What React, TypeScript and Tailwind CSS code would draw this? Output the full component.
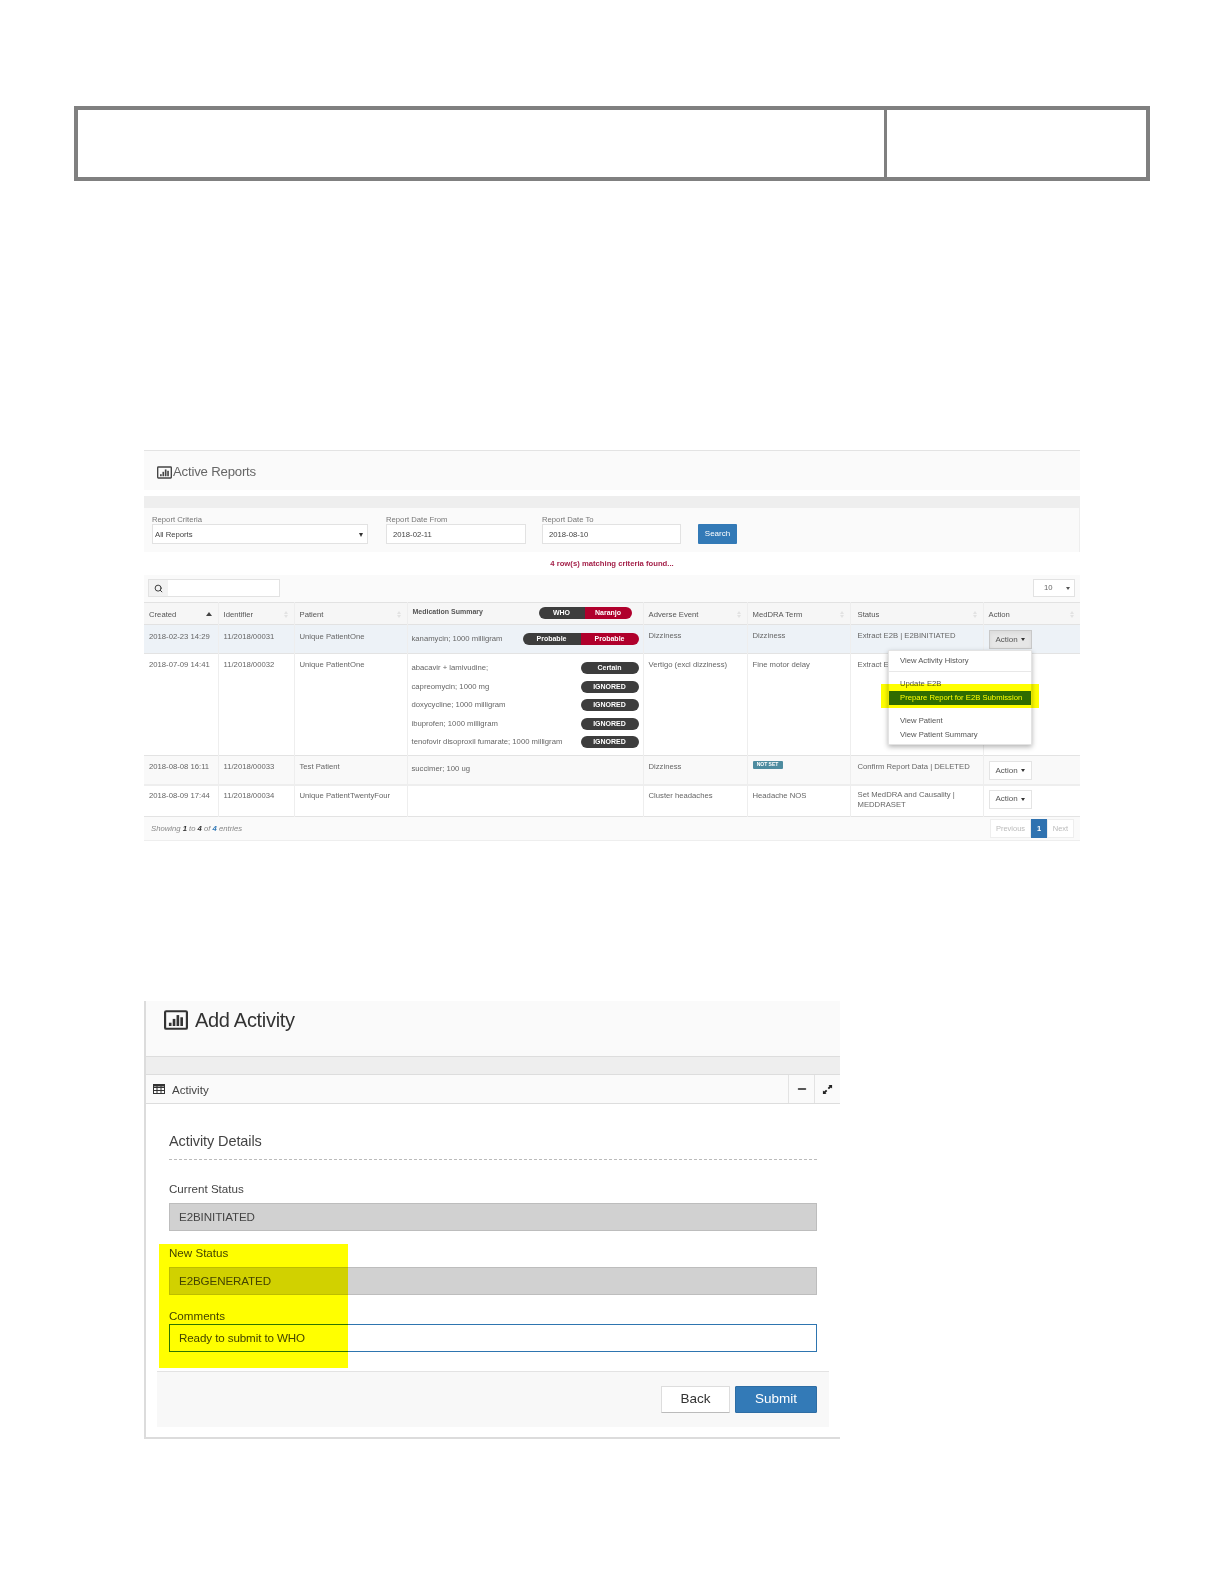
import React from "react";
import { Search, Minus } from "lucide-react";

const BarIcon = ({ className }: { className: string }) => (
  <svg viewBox="0 0 22 18" className={className} fill="none">
    <rect x="1" y="1" width="20" height="16" rx="1" stroke="currentColor" strokeWidth="2" />
    <rect x="4.5" y="11.5" width="2.4" height="3" fill="currentColor" />
    <rect x="8" y="8" width="2.4" height="6.5" fill="currentColor" />
    <rect x="11.5" y="4.5" width="2.4" height="10" fill="currentColor" />
    <rect x="15" y="6.5" width="2.4" height="8" fill="currentColor" />
  </svg>
);

const Sort = ({ active }: { active?: boolean }) =>
  active ? (
    <span className="w-0 h-0 border-x-[3px] border-x-transparent border-b-[4px] border-b-[#444] mr-[1px]" />
  ) : (
    <span className="flex flex-col gap-[1px] mr-[1px]">
      <span className="w-0 h-0 border-x-[2.5px] border-x-transparent border-b-[3px] border-b-[#e2e2e2]" />
      <span className="w-0 h-0 border-x-[2.5px] border-x-transparent border-t-[3px] border-t-[#e2e2e2]" />
    </span>
  );

const Pill = ({ text, right, className }: { text: string; right?: boolean; className: string }) => (
  <span
    className={`flex items-center justify-center h-[12px] text-white font-bold text-[7px] ${right ? "bg-[#b0002c] rounded-r-full rounded-l-[4px]" : "bg-[#3d3d3d] rounded-l-full rounded-r-[4px]"} ${className}`}
  >
    {text}
  </span>
);

const Dark = ({ text }: { text: string }) => (
  <span className="flex items-center justify-center w-[58px] h-[12px] rounded-full bg-[#3d3d3d] text-white font-bold text-[7px]">
    {text}
  </span>
);

const ActionButton = ({ open }: { open?: boolean }) => (
  <span
    className={`flex items-center justify-center gap-[3px] w-[43px] h-[19px] border text-[8px] text-[#555] ${open ? "bg-[#e6e6e6] border-[#c8c8c8] shadow-inner" : "bg-white border-[#e4e4e4]"}`}
  >
    Action
    <span className="w-0 h-0 border-x-[2.5px] border-x-transparent border-t-[3px] border-t-[#333]" />
  </span>
);

const headers = ["Created", "Identifier", "Patient", "", "Adverse Event", "MedDRA Term", "Status", "Action"];
const widths = ["w-[74px]", "w-[76px]", "w-[113px]", "w-[236px]", "w-[104px]", "w-[103px]", "w-[133px]", "w-[97px]"];

const td = "align-top border-l border-[#eeeeee] first:border-l-0 px-[5px] pt-[5px]";
const med = "align-top border-l border-[#eeeeee] px-[4px] pt-[7px]";
const status = "align-top border-l border-[#eeeeee] pl-[7px] pr-[3px] pt-[5px]";

const drugs = [
  ["abacavir + lamivudine;", "Certain"],
  ["capreomycin; 1000 mg", "IGNORED"],
  ["doxycycline; 1000 milligram", "IGNORED"],
  ["ibuprofen; 1000 milligram", "IGNORED"],
  ["tenofovir disoproxil fumarate; 1000 milligram", "IGNORED"],
];

const ActiveReports = () => (
  <section className="ml-[144px] w-[936px] mt-[269px] text-[7.7px] text-[#666] blur-[0.3px] font-['Liberation_Sans',Arial,sans-serif]">
    <div className="h-[40px] bg-[#fafafa] border-t border-[#e3e3e3] flex items-center pt-[3px] pl-[13px] gap-[1px]">
      <BarIcon className="w-[15px] h-[13px] text-[#444]" />
      <h1 className="text-[13.2px] tracking-[-0.2px] text-[#666]">Active Reports</h1>
    </div>
    <div className="mt-[6px] h-[12px] bg-[#eeeeee]" />
    <div className="h-[44px] bg-[#fafafa] flex items-end pl-[8px] pb-[8px] border-r border-[#eee]">
      <div className="w-[216px]">
        <label className="block text-[#777] leading-[10px] -mb-[1px]">Report Criteria</label>
        <div className="h-[20px] bg-white border border-[#e2e2e2] flex items-center justify-between pt-[1px] px-[2px] text-[#444]">
          All Reports
          <span className="w-0 h-0 mr-[2px] border-x-[2px] border-x-transparent border-t-[4px] border-t-[#333]" />
        </div>
      </div>
      <div className="w-[140px] ml-[18px]">
        <label className="block text-[#777] leading-[10px] -mb-[1px]">Report Date From</label>
        <div className="h-[20px] bg-white border border-[#e2e2e2] flex items-center pt-[1px] px-[6px] text-[#444]">2018-02-11</div>
      </div>
      <div className="w-[139px] ml-[16px]">
        <label className="block text-[#777] leading-[10px] -mb-[1px]">Report Date To</label>
        <div className="h-[20px] bg-white border border-[#e2e2e2] flex items-center pt-[1px] px-[6px] text-[#444]">2018-08-10</div>
      </div>
      <button className="ml-[17px] w-[39px] h-[20px] bg-[#337ab7] text-white text-[8px] rounded-[1px]">Search</button>
    </div>
    <p className="h-[23px] flex items-center justify-center font-bold text-[#a5234b]">4 row(s) matching criteria found...</p>
    <div className="h-[27px] bg-[#fafafa] flex items-start justify-between pt-[4px] px-[4px] pr-[5px]">
      <div className="flex w-[132px] h-[18px] bg-white border border-[#e2e2e2]">
        <span className="w-[19px] bg-[#f2f2f2] flex items-center justify-center">
          <Search className="w-[9px] h-[9px] text-[#333]" strokeWidth={2.5} />
        </span>
      </div>
      <div className="w-[42px] h-[18px] bg-white border border-[#e2e2e2] flex items-center justify-between pl-[10px] pr-[4px]">
        10
        <span className="w-0 h-0 border-x-[2px] border-x-transparent border-t-[3px] border-t-[#555]" />
      </div>
    </div>
    <div className="relative">
      <table className="table-fixed w-[936px] border-collapse">
        <colgroup>
          {widths.map((w) => (
            <col key={w} className={w} />
          ))}
        </colgroup>
        <thead>
          <tr className="h-[22px] bg-[#f6f6f6] border-y border-[#e2e2e2]">
            {headers.map((h, i) =>
              i === 3 ? (
                <th key={i} className="border-l border-[#eeeeee] pl-[5px] font-normal">
                  <div className="flex items-center justify-between">
                    <span className="font-bold text-[7px] text-[#555] -mt-[3px]">Medication Summary</span>
                    <span className="flex -mt-[1px] mr-[11px]">
                      <Pill text="WHO" className="w-[46px]" />
                      <Pill text="Naranjo" right className="w-[47px]" />
                    </span>
                  </div>
                </th>
              ) : (
                <th
                  key={i}
                  className={`border-l border-[#eeeeee] first:border-l-0 pr-[5px] pt-[2px] font-normal text-left ${i === 6 ? "pl-[7px]" : "pl-[5px]"}`}
                >
                  <div className="flex items-center justify-between text-[#555]">
                    {h}
                    <Sort active={i === 0} />
                  </div>
                </th>
              ),
            )}
          </tr>
        </thead>
        <tbody>
          <tr className="h-[29px] bg-[#edf2f7] border-b border-[#e3e3e3]">
            <td className={`${td} !pt-[6px]`}>2018-02-23 14:29</td>
            <td className={`${td} !pt-[6px]`}>11/2018/00031</td>
            <td className={`${td} !pt-[6px]`}>Unique PatientOne</td>
            <td className={`${med} !pt-[8px]`}>
              <div className="flex items-center justify-between">
                kanamycin; 1000 milligram
                <span className="flex">
                  <Pill text="Probable" className="w-[58px]" />
                  <Pill text="Probable" right className="w-[58px]" />
                </span>
              </div>
            </td>
            <td className={td}>Dizziness</td>
            <td className={td}>Dizziness</td>
            <td className={status}>Extract E2B | E2BINITIATED</td>
            <td className={td}>
              <ActionButton open />
            </td>
          </tr>
          <tr className="h-[102px] border-b border-[#e3e3e3]">
            <td className={td}>2018-07-09 14:41</td>
            <td className={td}>11/2018/00032</td>
            <td className={td}>Unique PatientOne</td>
            <td className={`${med} !pt-[5px]`}>
              {drugs.map(([name, rating]) => (
                <div key={name} className="flex items-center justify-between h-[18.5px]">
                  {name}
                  <Dark text={rating} />
                </div>
              ))}
            </td>
            <td className={td}>Vertigo (excl dizziness)</td>
            <td className={td}>Fine motor delay</td>
            <td className={status}>Extract E2B | E2BINITIATED</td>
            <td className={td} />
          </tr>
          <tr className="h-[29px] bg-[#f9f9f9] border-b-[2px] border-[#eeeeee]">
            <td className={td}>2018-08-08 16:11</td>
            <td className={td}>11/2018/00033</td>
            <td className={td}>Test Patient</td>
            <td className={med}>succimer; 100 ug</td>
            <td className={td}>Dizziness</td>
            <td className={td}>
              <span className="flex items-center justify-center w-[30px] h-[8px] rounded-[1px] bg-[#4e8ca0] text-white font-bold text-[5px]">NOT SET</span>
            </td>
            <td className={status}>Confirm Report Data | DELETED</td>
            <td className={td}>
              <ActionButton />
            </td>
          </tr>
          <tr className="h-[32px] border-b border-[#e3e3e3]">
            <td className={`${td} !pt-[4px]`}>2018-08-09 17:44</td>
            <td className={`${td} !pt-[4px]`}>11/2018/00034</td>
            <td className={`${td} !pt-[4px]`}>Unique PatientTwentyFour</td>
            <td className={td} />
            <td className={`${td} !pt-[4px]`}>Cluster headaches</td>
            <td className={`${td} !pt-[4px]`}>Headache NOS</td>
            <td className={`${status} !pt-[4px] leading-[10px]`}>
              Set MedDRA and Causality | MEDDRASET
            </td>
            <td className={`${td} !pt-[4px]`}>
              <ActionButton />
            </td>
          </tr>
        </tbody>
      </table>
      <div className="absolute z-10 left-[744px] top-[48px] w-[144px] h-[95px] bg-white border border-[#e3e3e3] shadow-[0_2px_5px_rgba(0,0,0,0.3)] text-[#555]">
        <div className="h-[20px] flex items-center pl-[11px]">View Activity History</div>
        <div className="h-px bg-[#e8e8e8]" />
        <div className="h-[19px] flex items-center pl-[11px] pt-[5px]">Update E2B</div>
        <div className="h-[14px] flex items-center pl-[11px] bg-[#2f6cb0] text-white font-medium">Prepare Report for E2B Submission</div>
        <div className="h-[9px]" />
        <div className="h-[14px] flex items-center pl-[11px]">View Patient</div>
        <div className="h-[14px] flex items-center pl-[11px]">View Patient Summary</div>
        <div className="absolute -left-[8px] top-[33px] w-[158px] h-[24px] bg-[#ffff00] mix-blend-multiply" />
      </div>
    </div>
    <div className="h-[24px] bg-[#fafafa] border-b border-[#eee] flex items-center justify-between pl-[7px] pr-[6px]">
      <span className="italic text-[#888]">
        Showing <b className="text-[#333]">1</b> to <b className="text-[#333]">4</b> of <b className="text-[#337ab7]">4</b> entries
      </span>
      <div className="flex h-[19px] text-[#bbb] text-[7.5px]">
        <span className="w-[41px] flex items-center justify-center bg-white border border-[#eee]">Previous</span>
        <span className="w-[16px] flex items-center justify-center bg-[#2f72b0] text-white font-bold">1</span>
        <span className="w-[27px] flex items-center justify-center bg-white border border-[#eee]">Next</span>
      </div>
    </div>
  </section>
);

const Field = ({ label, mt, inputMt, value, active }: { label: string; mt: string; inputMt: string; value: string; active?: boolean }) => (
  <>
    <label className={`block text-[11.6px] leading-[14px] text-[#444] ${mt}`}>{label}</label>
    <div
      className={`h-[28px] flex items-center pl-[9px] text-[11.6px] text-[#444] tracking-[-0.1px] border ${inputMt} ${active ? "bg-white border-[#2e75b0]" : "bg-[#d1d1d1] border-[#bdbdbd]"}`}
    >
      {value}
    </div>
  </>
);

const AddActivity = () => (
  <section className="relative ml-[144px] w-[696px] mt-[160px] border-l-2 border-b-2 border-[#dcdcdc] font-['Liberation_Sans',Arial,sans-serif] text-[#333]">
    <div className="h-[56px] bg-[#fafafa] border-b border-[#ddd] flex items-start pt-[8px] pl-[18px] gap-[7px]">
      <BarIcon className="w-[24px] h-[20px] text-[#333] mt-[1px]" />
      <h1 className="text-[20px] tracking-[-0.3px] leading-[22px]">Add Activity</h1>
    </div>
    <div className="h-[17px] bg-[#eeeeee]" />
    <div className="h-[30px] bg-[#fafafa] border-y border-[#ddd] flex items-stretch">
      <div className="flex-1 flex items-center pl-[7px] pt-[2px] gap-[7px] text-[11.6px] text-[#444]">
        <svg viewBox="0 0 12 10" className="w-[12px] h-[10px] text-[#333] -mt-[2px]" fill="none" stroke="currentColor" strokeWidth="1">
          <rect x="0.5" y="0.5" width="11" height="9" />
          <path d="M0.5 3.5H11.5M0.5 6.5H11.5M4 0.5V9.5M8 0.5V9.5" />
          <path d="M0.5 1.5H11.5" strokeWidth="2" />
        </svg>
        Activity
      </div>
      <div className="w-[26px] border-l border-[#e3e3e3] flex items-center justify-center">
        <Minus className="w-[12px] h-[12px] text-[#222]" strokeWidth={3} />
      </div>
      <div className="w-[26px] border-l border-[#e3e3e3] flex items-center justify-center">
        <svg viewBox="0 0 12 12" className="w-[11px] h-[11px] text-[#222]" fill="currentColor">
          <path d="M7 1H11V5L9.7 3.7L7.6 5.8L6.2 4.4L8.3 2.3Z" />
          <path d="M1 11V7L2.3 8.3L4.4 6.2L5.8 7.6L3.7 9.7L5 11Z" />
        </svg>
      </div>
    </div>
    <div className="bg-white px-[23px] pt-[28px] pb-[19px]">
      <h2 className="text-[14.5px] leading-[18px] tracking-[-0.1px] text-[#444] pb-[9px] border-b border-dashed border-[#bbb]">Activity Details</h2>
      <Field label="Current Status" mt="mt-[22px]" inputMt="mt-[7px]" value="E2BINITIATED" />
      <Field label="New Status" mt="mt-[15px]" inputMt="mt-[7px]" value="E2BGENERATED" />
      <Field label="Comments" mt="mt-[14px]" inputMt="mt-[1px]" value="Ready to submit to WHO" active />
    </div>
    <div className="ml-[11px] mr-[11px] mb-[10px] h-[56px] bg-[#f8f8f8] border-t border-[#e3e3e3] flex items-start justify-end gap-[5px] pt-[14px] pr-[12px]">
      <button className="w-[69px] h-[27px] bg-white border border-[#ddd] border-b-[#bbb] text-[13.5px] text-[#333] rounded-[1px]">Back</button>
      <button className="w-[82px] h-[27px] bg-[#337ab7] border border-[#2e6da4] text-[13.5px] text-white rounded-[1px]">Submit</button>
    </div>
    <div className="absolute left-[13px] top-[243px] w-[189px] h-[124px] bg-[#ffff00] mix-blend-multiply" />
  </section>
);

export default function App() {
  return (
    <div className="w-[1224px] h-[1584px] bg-white pt-[106px] overflow-hidden">
      <div className="ml-[74px] w-[1076px] h-[75px] border-4 border-[#808080] flex">
        <div className="w-[809px] border-r-[3px] border-[#808080]" />
        <div className="flex-1" />
      </div>
      <ActiveReports />
      <AddActivity />
    </div>
  );
}
